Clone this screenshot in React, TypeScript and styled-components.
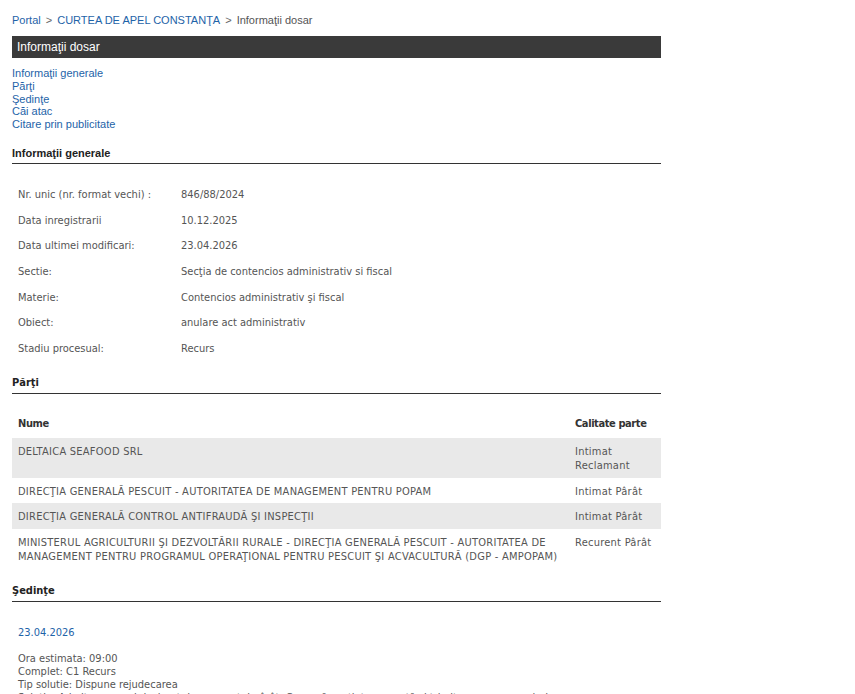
import React from "react";
import styled, { createGlobalStyle } from "styled-components";

const Global = createGlobalStyle`
  html, body { margin: 0; padding: 0; background: #ffffff; }
  body { font-family: "Liberation Sans", Arial, sans-serif; }
`;

const Page = styled.div`
  width: 855px;
  height: 694px;
  padding: 14px 0 0 12px;
  overflow: hidden;
  box-sizing: border-box;
`;

const Column = styled.div`
  width: 649px;
`;

const Breadcrumb = styled.div`
  font: 11px/13px "Liberation Sans", Arial, sans-serif;
  color: #555;
  margin-bottom: 9px;
`;

const Crumb = styled.a`
  color: #1e63a8;
  text-decoration: none;
`;

const Sep = styled.span`
  color: #666;
  margin: 0 5px 0 5px;
`;

const Bar = styled.div`
  height: 22px;
  background: #3a3a3a;
  color: #ffffff;
  font: 12px/22px "Liberation Sans", Arial, sans-serif;
  padding-left: 5px;
`;

const LinkList = styled.div`
  margin-top: 9px;
  display: flex;
  flex-direction: column;
`;

const NavLink = styled.a`
  font: 11px/12.75px "Liberation Sans", Arial, sans-serif;
  color: #1e63a8;
  text-decoration: none;
`;

const Heading = styled.div<{ $arial?: boolean; $top: number }>`
  margin-top: ${(p) => p.$top}px;
  font-family: ${(p) =>
    p.$arial
      ? `"Liberation Sans", Arial, sans-serif`
      : `"DejaVu Sans Condensed", "DejaVu Sans", sans-serif`};
  font-size: 11px;
  font-weight: bold;
  line-height: 14px;
  color: #222;
  padding-bottom: 3px;
  border-bottom: 1px solid #333;
`;

const InfoTable = styled.table`
  margin-top: 18px;
  border-collapse: collapse;
  table-layout: fixed;
  width: 100%;
  font: 11px "DejaVu Sans Condensed", "DejaVu Sans", sans-serif;
  color: #555;
`;

const InfoLabel = styled.td`
  box-sizing: border-box;
  width: 163px;
  padding: 0 6px;
  height: 25.66px;
  vertical-align: middle;
`;

const InfoValue = styled.td`
  padding: 0 6px;
  height: 25.66px;
  vertical-align: middle;
`;

const PartyTable = styled.table`
  margin-top: 13px;
  border-collapse: collapse;
  width: 100%;
  font: 11px/14px "DejaVu Sans Condensed", "DejaVu Sans", sans-serif;
  color: #555;
`;

const Th = styled.th<{ $narrow?: boolean }>`
  text-align: left;
  font-weight: bold;
  color: #333;
  letter-spacing: -0.4px;
  padding: 10px 6px 7px;
  width: ${(p) => (p.$narrow ? "80px" : "auto")};
`;

const Row = styled.tr<{ $shaded: boolean }>`
  background: ${(p) => (p.$shaded ? "#e9e9e9" : "#ffffff")};
`;

const Td = styled.td`
  padding: 7px 6px 4.5px;
  letter-spacing: 0.25px;
  vertical-align: top;
`;

const DateLink = styled.div`
  margin-top: 24px;
  padding-left: 6px;
  font: 11px/14px "DejaVu Sans Condensed", "DejaVu Sans", sans-serif;
  color: #1e63a8;
`;

const Details = styled.div`
  margin-top: 11.5px;
  padding-left: 6px;
  font: 11px/13px "DejaVu Sans Condensed", "DejaVu Sans", sans-serif;
  color: #555;
`;

const info: [string, string][] = [
  ["Nr. unic (nr. format vechi) :", "846/88/2024"],
  ["Data inregistrarii", "10.12.2025"],
  ["Data ultimei modificari:", "23.04.2026"],
  ["Sectie:", "Secţia de contencios administrativ si fiscal"],
  ["Materie:", "Contencios administrativ şi fiscal"],
  ["Obiect:", "anulare act administrativ"],
  ["Stadiu procesual:", "Recurs"],
];

const parties: [string, string][] = [
  ["DELTAICA SEAFOOD SRL", "Intimat Reclamant"],
  ["DIRECŢIA GENERALĂ PESCUIT - AUTORITATEA DE MANAGEMENT PENTRU POPAM", "Intimat Pârât"],
  ["DIRECŢIA GENERALĂ CONTROL ANTIFRAUDĂ ŞI INSPECŢII", "Intimat Pârât"],
  [
    "MINISTERUL AGRICULTURII ŞI DEZVOLTĂRII RURALE - DIRECŢIA GENERALĂ PESCUIT - AUTORITATEA DE MANAGEMENT PENTRU PROGRAMUL OPERAŢIONAL PENTRU PESCUIT ŞI ACVACULTURĂ (DGP - AMPOPAM)",
    "Recurent Pârât",
  ],
];

export default function App() {
  return (
    <>
      <Global />
      <Page>
        <Column>
          <Breadcrumb>
            <Crumb href="#">Portal</Crumb>
            <Sep>&gt;</Sep>
            <Crumb href="#">CURTEA DE APEL CONSTANŢA</Crumb>
            <Sep>&gt;</Sep>
            Informaţii dosar
          </Breadcrumb>
          <Bar>Informaţii dosar</Bar>
          <LinkList>
            <NavLink href="#">Informaţii generale</NavLink>
            <NavLink href="#">Părţi</NavLink>
            <NavLink href="#">Şedinţe</NavLink>
            <NavLink href="#">Căi atac</NavLink>
            <NavLink href="#">Citare prin publicitate</NavLink>
          </LinkList>

          <Heading $arial $top={15}>Informaţii generale</Heading>
          <InfoTable>
            <tbody>
              {info.map(([k, v]) => (
                <tr key={k}>
                  <InfoLabel>{k}</InfoLabel>
                  <InfoValue>{v}</InfoValue>
                </tr>
              ))}
            </tbody>
          </InfoTable>

          <Heading $top={15}>Părţi</Heading>
          <PartyTable>
            <thead>
              <tr>
                <Th>Nume</Th>
                <Th $narrow>Calitate parte</Th>
              </tr>
            </thead>
            <tbody>
              {parties.map(([n, q], i) => (
                <Row key={n} $shaded={i % 2 === 0}>
                  <Td>{n}</Td>
                  <Td>{q}</Td>
                </Row>
              ))}
            </tbody>
          </PartyTable>

          <Heading $top={16}>Şedinţe</Heading>
          <DateLink>23.04.2026</DateLink>
          <Details>
            Ora estimata: 09:00
            <br />
            Complet: C1 Recurs
            <br />
            Tip solutie: Dispune rejudecarea
            <br />
            Solutie: Admite recursul declarat de recurentul pârât. Casează sentinţa recurată şi trimite cauza spre rejudecare.
          </Details>
        </Column>
      </Page>
    </>
  );
}
